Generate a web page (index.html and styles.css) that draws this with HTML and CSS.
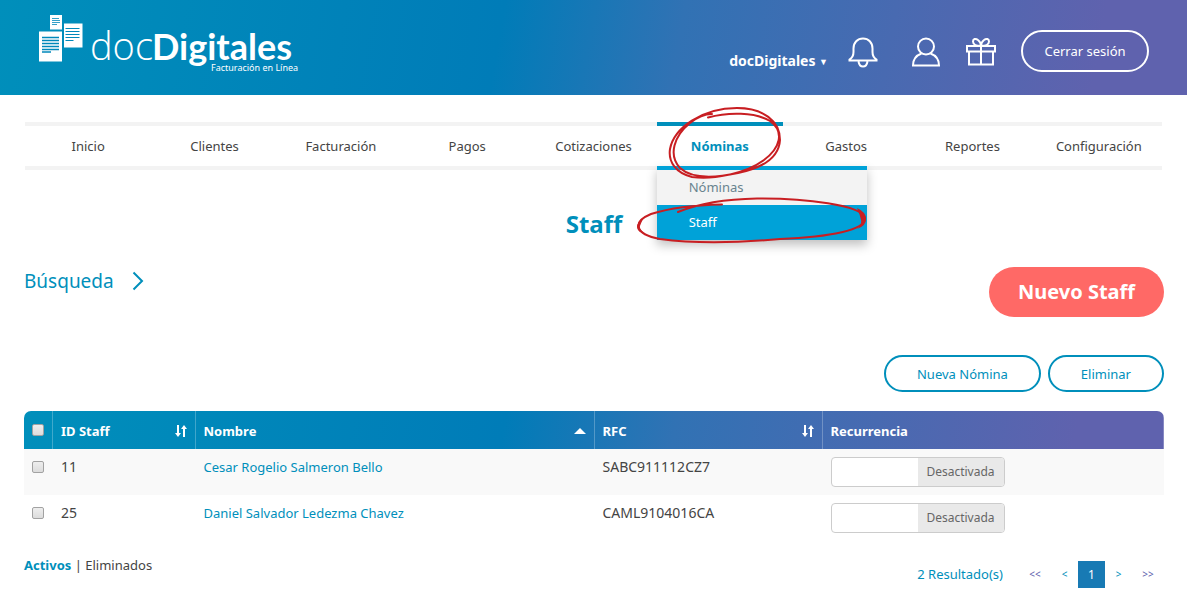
FILE: index.html
```html
<!DOCTYPE html>
<html lang="es">
<head>
<meta charset="utf-8">
<meta name="viewport" content="width=device-width, initial-scale=1">
<title>docDigitales - Staff</title>
<link rel="stylesheet" href="styles.css">
</head>
<body>
<header class="topbar">
  <a class="logo" href="#" aria-label="docDigitales">
    <svg width="262" height="66" viewBox="38 12 262 66">
      <path fill="#fff" d="M50 15h12v14.500H50zM64 23.500h18.500v24H64zM39 31.500h23v30H39z"/>
      <g stroke="#0088ba" fill="none">
        <path d="M52 18.500h7M52 20.500h8M52 22.500h8M52 24.500h5" stroke-width=".8"/>
        <path d="M65.500 28.500h14M65.500 31.500h14M65.500 34.500h14M65.500 37.500h14M65.500 40.500h8" stroke-width="1.200"/>
        <path d="M42 37.500h17M42 40.500h17M42 43.500h17M42 46.500h17M42 49.500h17M42 52h9" stroke-width="1.300"/>
      </g>
      <text class="logo-light" x="90" y="60">doc</text>
      <text class="logo-bold" x="152" y="60">Digitales</text>
      <text class="logo-tag" x="211" y="71">Facturación en Línea</text>
    </svg>
  </a>
  <div class="tools">
    <button class="account" type="button">docDigitales <span class="caret">▼</span></button>
    <a class="tool bell" href="#" aria-label="Notificaciones">
      <svg width="30" height="32" viewBox="0 0 30 32"><path d="M1.500 22.500C4 21 5.500 18.500 5.500 15v-3.500C5.500 5.500 9.500 1.500 15 1.500s9.500 4 9.500 10V15c0 3.500 1.500 6 4 7.500v1h-27zM10.500 24.500c.5 3 2 5 4.500 5s4-2 4.500-5"/></svg>
    </a>
    <a class="tool user" href="#" aria-label="Perfil">
      <svg width="30" height="32" viewBox="0 0 30 32"><circle cx="15" cy="9.500" r="8"/><path d="M10.500 16.500C5 18.500 2 22.500 2 28.500h26c0-6-3-10-8.500-12"/></svg>
    </a>
    <a class="tool gift" href="#" aria-label="Regalos">
      <svg width="30" height="32" viewBox="0 0 30 32"><path d="M1 9h28v5.500H1zM3 14.500v13h24v-13M15 9v18.500M15 9C10 9 7 7 7 4.500S9.500 1 12 3c2 1.500 3 3.500 3 6zM15 9c5 0 8-2 8-4.500S20.500 1 18 3c-2 1.500-3 3.500-3 6z"/></svg>
    </a>
    <button class="logout" type="button">Cerrar sesión</button>
  </div>
</header>

<main class="page">
  <nav class="menu">
    <a class="menu-link" href="#">Inicio</a>
    <a class="menu-link" href="#">Clientes</a>
    <a class="menu-link" href="#">Facturación</a>
    <a class="menu-link" href="#">Pagos</a>
    <a class="menu-link" href="#">Cotizaciones</a>
    <div class="menu-item">
      <a class="menu-link active" href="#">Nóminas</a>
      <div class="submenu">
        <a href="#">Nóminas</a>
        <a class="selected" href="#">Staff</a>
      </div>
      <svg class="marks" width="240" height="150" viewBox="633 100 240 150" aria-hidden="true">
        <path d="M708 117.500C728 112 755 112 770 121C785 132 780 148 764 160C745 174 712 180 692 177C676 173 668 162 670 149C674 128 702 108 737 108C763 108 780 121 780 140C779 158 762 168 738 173C715 178 692 179 680 168C668 155 674 136 690 123C700 115 707 114 712 114"/>
        <path d="M678 212C700 203 730 199 757 198.500C805 198 862 205 865 218C866 230 830 237 780 239C735 243 690 243 660 239C634 234 632 222 651 214C670 208 695 205 722 204.500"/>
        <path class="blot" d="M857 208q9 4 9 11t-9 10q5-4 4-9t-4-12zM644 217q-7 5-7 10t8 7q-6-5-5-8t4-9z"/>
      </svg>
    </div>
    <a class="menu-link" href="#">Gastos</a>
    <a class="menu-link" href="#">Reportes</a>
    <a class="menu-link" href="#">Configuración</a>
  </nav>

  <h1 class="title">Staff</h1>

  <div class="actions">
    <button class="search" type="button">Búsqueda
      <svg width="12" height="20" viewBox="0 0 12 20"><path d="M1.500 1.500L10 10l-8.500 8.500"/></svg>
    </button>
    <button class="primary" type="button">Nuevo Staff</button>
  </div>
  <div class="bulk">
    <button class="outline" type="button">Nueva Nómina</button>
    <button class="outline" type="button">Eliminar</button>
  </div>

  <table class="staff">
    <colgroup><col class="c-check"><col class="c-id"><col class="c-name"><col class="c-rfc"><col></colgroup>
    <thead>
      <tr>
        <th class="check"><input class="box" type="checkbox" aria-label="Seleccionar todos"></th>
        <th><div class="head">ID Staff <svg width="12" height="14" viewBox="0 0 12 14"><path d="M2 1h2v8h2l-3 4-3-4h2zM8 13h2V5h2L9 1 6 5h2z"/></svg></div></th>
        <th><div class="head">Nombre <svg width="12" height="14" viewBox="0 0 12 14"><path d="M6 4l6 6H0z"/></svg></div></th>
        <th><div class="head">RFC <svg width="12" height="14" viewBox="0 0 12 14"><path d="M2 1h2v8h2l-3 4-3-4h2zM8 13h2V5h2L9 1 6 5h2z"/></svg></div></th>
        <th>Recurrencia</th>
      </tr>
    </thead>
    <tbody>
      <tr>
        <td class="check"><input class="box" type="checkbox" aria-label="Seleccionar 11"></td>
        <td class="num">11</td>
        <td><a href="#">Cesar Rogelio Salmeron Bello</a></td>
        <td class="num">SABC911112CZ7</td>
        <td><label class="switch"><input type="checkbox"><span>Desactivada</span></label></td>
      </tr>
      <tr>
        <td class="check"><input class="box" type="checkbox" aria-label="Seleccionar 25"></td>
        <td class="num">25</td>
        <td><a href="#">Daniel Salvador Ledezma Chavez</a></td>
        <td class="num">CAML9104016CA</td>
        <td><label class="switch"><input type="checkbox"><span>Desactivada</span></label></td>
      </tr>
    </tbody>
  </table>

  <footer class="foot">
    <div class="filter"><a class="on" href="#">Activos</a> | <a href="#">Eliminados</a></div>
    <div class="pager">
      <span class="count">2 Resultado(s)</span>
      <a class="far" href="#">&lt;&lt;</a>
      <a href="#">&lt;</a>
      <a class="current" href="#">1</a>
      <a href="#">&gt;</a>
      <a class="far" href="#">&gt;&gt;</a>
    </div>
  </footer>
</main>
</body>
</html>
```
FILE: styles.css
```css
* { box-sizing: border-box; }
body {
  margin: 0;
  background: #fff;
  color: #444;
  font: 13px/20px "Noto Sans", "Open Sans", sans-serif;
}
a { color: inherit; text-decoration: none; }
button { font: inherit; color: inherit; background: none; border: 0; padding: 0; cursor: pointer; }
svg { display: block; }

.topbar, .staff thead {
  background: linear-gradient(100deg, #008fbb 0%, #007cb8 42%, #3172b4 57%, #5f62ae 92%);
}
.topbar {
  display: flex;
  justify-content: space-between;
  align-items: flex-start;
  height: 95px;
  padding: 12px 38px 0;
  color: #fff;
}
.logo text { fill: #fff; }
.logo-light { font: 300 38px "Open Sans", sans-serif; }
.logo-bold { font: 700 36px Lato, sans-serif; }
.logo-tag { font: 9px "Noto Sans", sans-serif; }

.tools { display: flex; align-items: center; padding-top: 18px; }
.account { font-size: 14px; font-weight: 700; padding-top: 20px; margin-right: 20px; }
.caret { font-size: 9px; vertical-align: 1px; }
.tool { padding-top: 3px; }
.tool svg { fill: none; stroke: #fff; stroke-width: 2; }
.gift svg { stroke-width: 2; }
.bell { margin-right: 33px; }
.user { margin-right: 25px; }
.gift { margin-right: 25px; }
.logout {
  width: 128px;
  height: 42px;
  border: 2px solid #fff;
  border-radius: 21px;
}

.page { padding: 27px 23px 20px 24px; }
.menu {
  display: grid;
  grid-template-columns: repeat(9, 1fr);
  margin: 0 2px 0 1px;
  background: linear-gradient(#f3f3f3 4px, #fff 4px, #fff 44px, #f3f3f3 44px);
}
.menu-link { display: block; padding: 14px 0; text-align: center; }
.menu-item { position: relative; }
.active { color: #008fbb; font-weight: 700; box-shadow: inset 0 4px #008fbb; }
.submenu {
  position: absolute;
  top: 44px;
  left: 0;
  width: 210px;
  border-top: 4px solid #00a2d8;
  background: #f3f3f3;
  box-shadow: 0 5px 10px rgba(0, 0, 0, .25);
}
.submenu a { display: block; padding: 7px 32px 8px; color: #69838f; }
.submenu .selected { background: #00a2d8; color: #fff; }
.marks {
  position: absolute;
  top: -22px;
  left: -24px;
  fill: none;
  stroke: #c81e22;
  stroke-width: 2;
  stroke-linecap: round;
  pointer-events: none;
}
.marks .blot { fill: #c81e22; stroke: none; }

.title { margin: 38px 0 27px; text-align: center; color: #008fbb; font-size: 24px; line-height: 32px; }
.actions { display: flex; justify-content: space-between; align-items: flex-start; }
.search { display: flex; align-items: center; gap: 18px; color: #008fbb; font-size: 19px; line-height: 28px; }
.search svg { fill: none; stroke: #008fbb; stroke-width: 2; }
.primary {
  width: 175px;
  height: 50px;
  border-radius: 25px;
  background: #ff6966;
  color: #fff;
  font-size: 20px;
  font-weight: 700;
}
.bulk { display: flex; justify-content: flex-end; gap: 7px; margin: 38px 0 19px; }
.outline {
  height: 37px;
  padding: 0 31px;
  border: 2px solid #008fbb;
  border-radius: 19px;
  color: #008fbb;
}

.staff {
  width: 100%;
  table-layout: fixed;
  border-collapse: separate;
  border-spacing: 0;
  border-radius: 7px 7px 0 0;
  overflow: hidden;
}
.c-check { width: 29px; }
.c-id { width: 12.5%; }
.c-name { width: 35%; }
.c-rfc { width: 20%; }
.staff th { height: 38px; padding: 2px 8px 0; color: #fff; text-align: left; border-right: 1px solid rgba(255, 255, 255, .25); }
.staff td { height: 46px; padding: 8px 8px; vertical-align: top; }
.staff .num { font-size: 14px; }
.staff tbody tr:nth-child(odd) { background: #f9f9f9; }
.staff td a { color: #008fbb; }
.head { display: flex; justify-content: space-between; align-items: center; }
.head svg { fill: #fff; }
.staff .check { padding: 0 8px; }
.staff td.check { padding-top: 12px; }
.box {
  display: block;
  appearance: none;
  width: 12px;
  height: 12px;
  margin: 0;
  border: 1px solid #a2a2a2;
  border-radius: 2px;
  background: linear-gradient(#eee, #dcdcdc);
}
.switch {
  display: flex;
  width: 174px;
  height: 30px;
  border: 1px solid #ccc;
  border-radius: 4px;
  background: #fff;
  overflow: hidden;
}
.switch input { appearance: none; flex: 1; margin: 0; }
.switch span { width: 86px; background: #e9e9e9; color: #666; font-size: 12px; line-height: 28px; text-align: center; }

.foot { display: flex; justify-content: space-between; padding-top: 14px; }
.on { color: #008fbb; font-weight: 700; }
.pager { display: flex; align-items: center; padding-top: 6px; color: #008fbb; font-size: 10px; line-height: 27px; }
.pager a { width: 27px; text-align: center; }
.pager .far { width: 32px; color: #5f62ae; }
.pager .current { background: #187ab4; color: #fff; font-size: 12px; }
.count { margin-right: 16px; font-size: 13px; }
```
